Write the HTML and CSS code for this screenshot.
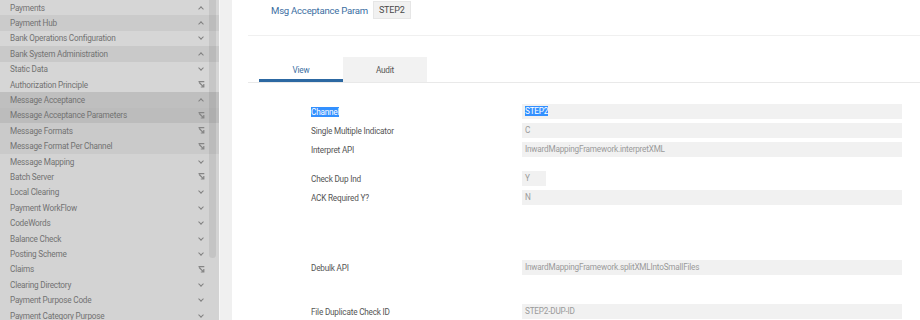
FILE: index.html
```html
<!DOCTYPE html>
<html lang="en">
<head>
    <meta charset="UTF-8">
    <meta name="viewport" content="width=device-width, initial-scale=1.0">
    <title>Msg Acceptance Param</title>
    <link rel="stylesheet" href="styles.css">
</head>
<body>
    <div class="page">
        <div class="sidebar">
            <ul class="menu">
                <li class="item"><span>Payments</span><i class="ic up"></i></li>
                <li class="item hub"><span>Payment Hub</span><i class="ic up"></i></li>
                <li class="item"><span>Bank Operations Configuration</span><i class="ic down"></i></li>
                <li class="item open"><span>Bank System Administration</span><i class="ic up"></i></li>
                <li class="item"><span>Static Data</span><i class="ic down"></i></li>
                <li class="item"><span>Authorization Principle</span><svg class="link" viewBox="0 0 7 7"><path d="M0.5 0.7H6.3M1.2 1.5L5.6 5.9M5.8 3V6H2.8"/></svg></li>
                <li class="item open2"><span>Message Acceptance</span><i class="ic up"></i></li>
                <li class="item active"><span>Message Acceptance Parameters</span><svg class="link" viewBox="0 0 7 7"><path d="M0.5 0.7H6.3M1.2 1.5L5.6 5.9M5.8 3V6H2.8"/></svg></li>
                <li class="item sub"><span>Message Formats</span><svg class="link" viewBox="0 0 7 7"><path d="M0.5 0.7H6.3M1.2 1.5L5.6 5.9M5.8 3V6H2.8"/></svg></li>
                <li class="item sub"><span>Message Format Per Channel</span><svg class="link" viewBox="0 0 7 7"><path d="M0.5 0.7H6.3M1.2 1.5L5.6 5.9M5.8 3V6H2.8"/></svg></li>
                <li class="item plain"><span>Message Mapping</span><i class="ic down"></i></li>
                <li class="item plain"><span>Batch Server</span><svg class="link" viewBox="0 0 7 7"><path d="M0.5 0.7H6.3M1.2 1.5L5.6 5.9M5.8 3V6H2.8"/></svg></li>
                <li class="item plain"><span>Local Clearing</span><i class="ic down"></i></li>
                <li class="item plain"><span>Payment WorkFlow</span><i class="ic down"></i></li>
                <li class="item plain"><span>CodeWords</span><i class="ic down"></i></li>
                <li class="item plain"><span>Balance Check</span><i class="ic down"></i></li>
                <li class="item plain"><span>Posting Scheme</span><i class="ic down"></i></li>
                <li class="item plain"><span>Claims</span><svg class="link" viewBox="0 0 7 7"><path d="M0.5 0.7H6.3M1.2 1.5L5.6 5.9M5.8 3V6H2.8"/></svg></li>
                <li class="item plain"><span>Clearing Directory</span><i class="ic down"></i></li>
                <li class="item plain"><span>Payment Purpose Code</span><i class="ic down"></i></li>
                <li class="item plain"><span>Payment Category Purpose</span><i class="ic down"></i></li>
            </ul>
            <div class="thumb"></div>
        </div>
        <div class="gutter"></div>
        <div class="main">
            <div class="title-bar">
                <span class="title">Msg Acceptance Param</span>
                <span class="badge">STEP2</span>
            </div>
            <div class="tabs">
                <div class="tab current">View</div>
                <div class="tab">Audit</div>
            </div>
            <div class="form">
                <div class="row"><label><mark>Channel</mark></label><div class="value"><mark>STEP2</mark></div></div>
                <div class="row"><label>Single Multiple Indicator</label><div class="value">C</div></div>
                <div class="row"><label>Interpret API</label><div class="value">InwardMappingFramework.interpretXML</div></div>
                <div class="row gap1"><label>Check Dup Ind</label><div class="value short">Y</div></div>
                <div class="row"><label>ACK Required Y?</label><div class="value">N</div></div>
                <div class="row gap2"><label>Debulk API</label><div class="value">InwardMappingFramework.splitXMLIntoSmallFiles</div></div>
                <div class="row gap3"><label>File Duplicate Check ID</label><div class="value">STEP2-DUP-ID</div></div>
            </div>
        </div>
    </div>
</body>
</html>
```

FILE: styles.css
```css
body{
    margin:0;
    font-family:Roboto, "Liberation Sans", sans-serif;
    background:#fff;
    overflow:hidden;
}
div.page{
    display:flex;
    height:320px;
}
div.sidebar{
    position:relative;
    width:219px;
    flex:0 0 219px;
    background-color:#d3d3d3;
    border-right:1px solid #f7f7f7;
    overflow:hidden;
}
ul.menu{
    list-style:none;
    margin:0;
    padding:0;
}
li.item{
    display:flex;
    align-items:center;
    justify-content:space-between;
    height:15.4px;
    padding:0 15px 0 10px;
    font-size:8.2px;
    letter-spacing:-0.2px;
    color:#727272;
    background-color:#d6d6d6;
}
li.hub{ background-color:#cbcbcb; }
li.open{ background-color:#c9c9c9; }
li.open2{ background-color:#bfbfbf; }
li.active{ background-color:#bcbcbc; }
li.sub{ background-color:#cacaca; }
li.plain{ background-color:#d3d3d3; }
i.ic{
    display:block;
    width:6px;
    height:6px;
    position:relative;
}
i.up::before, i.down::before{
    content:"";
    position:absolute;
    left:1px;
    width:3px;
    height:3px;
    border-left:1px solid #808080;
    border-top:1px solid #808080;
}
i.up::before{
    top:2px;
    transform:rotate(45deg);
}
i.down::before{
    top:0;
    transform:rotate(225deg);
}
svg.link{
    width:7px;
    height:7px;
    margin-right:-1px;
    fill:none;
    stroke:#858585;
    stroke-width:1.2;
}
div.thumb{
    position:absolute;
    left:209px;
    top:0;
    width:7px;
    height:258px;
    border-radius:0 0 4px 4px;
    background-color:rgba(0,0,0,0.07);
}
div.gutter{
    flex:0 0 12px;
    background-color:#f0f0f0;
}
div.main{
    flex:1;
    padding-left:16px;
    background:#fff;
}
div.title-bar{
    display:flex;
    align-items:center;
    gap:5px;
    height:36px;
    box-sizing:border-box;
    padding:0 0 15px 23px;
    border-bottom:1px solid #f0f0f0;
}
span.title{
    font-size:9.6px;
    letter-spacing:-0.25px;
    color:#3b6ea2;
}
span.badge{
    font-size:9px;
    letter-spacing:-0.2px;
    color:#4a4a4a;
    background:#f1f1f1;
    border:1px solid #e6e6e6;
    padding:3px 5px;
}
div.tabs{
    display:flex;
    margin-top:21px;
    padding-left:11px;
    border-bottom:1px solid #e9e9e9;
}
div.tab{
    width:84px;
    height:25px;
    box-sizing:border-box;
    display:flex;
    align-items:center;
    justify-content:center;
    font-size:8.2px;
    letter-spacing:-0.2px;
    color:#555;
    background:#f2f2f2;
}
div.tab.current{
    color:#3b6ea2;
    background:#fff;
    border-bottom:3px solid #2c68a2;
    padding-top:3px;
}
div.form{
    padding:21px 18px 0 63px;
}
div.row{
    display:flex;
    align-items:center;
    height:15px;
    margin-bottom:4px;
}
div.row.gap1{ margin-top:14px; }
div.row.gap2{ margin-top:55px; }
div.row.gap3{ margin-top:29px; }
div.row label{
    flex:0 0 211px;
    font-size:8.2px;
    letter-spacing:-0.2px;
    color:#555;
}
div.value{
    flex:1;
    height:15px;
    line-height:15px;
    padding-left:3px;
    font-size:8.2px;
    letter-spacing:-0.2px;
    color:#9a9a9a;
    background:#f1f1f1;
}
div.value.short{
    flex:0 0 21px;
}
mark{
    background:#3390ff;
    color:#fff;
}
```
